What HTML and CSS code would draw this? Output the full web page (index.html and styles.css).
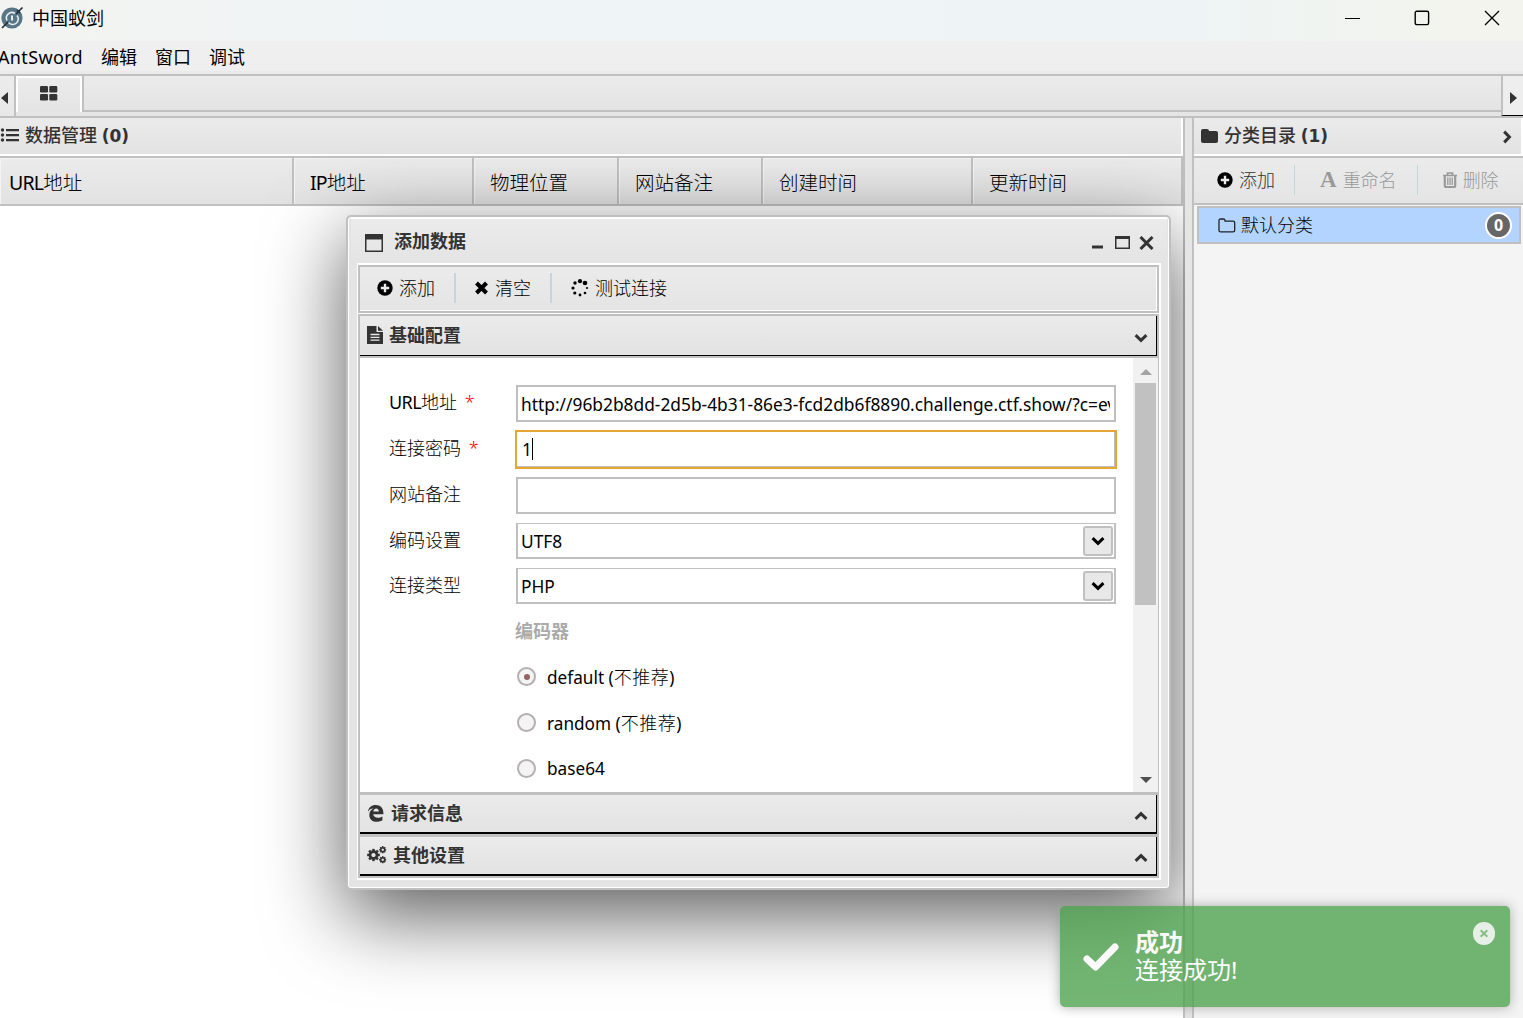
FILE: index.html
```html
<!DOCTYPE html>
<html lang="zh-CN">
<head>
<meta charset="utf-8">
<title>中国蚁剑</title>
<link rel="stylesheet" href="styles.css">
</head>
<body>
<svg class="defs" width="0" height="0">
  <symbol id="plus" viewBox="0 0 16 16"><circle cx="8" cy="8" r="7.7"/><path d="M8 3.8v8.4M3.8 8h8.4" stroke="#ececec" stroke-width="2.4"/></symbol>
  <symbol id="chev" viewBox="0 0 14 10"><path d="M1.6 2.2 7 7.4l5.4-5.2" fill="none" stroke="currentColor" stroke-width="3"/></symbol>
  <symbol id="cog" viewBox="-8 -8 16 16"><circle r="4.3" fill="none" stroke="currentColor" stroke-width="3.4"/><path d="M0-7.8V-5M0 5v2.8M-7.8 0H-5M5 0h2.8M-5.5-5.5l2 2M3.5 3.5l2 2M-5.5 5.5l2-2M3.5-3.5l2-2" stroke="currentColor" stroke-width="3"/></symbol>
</svg>

<header class="titlebar">
  <svg class="logo" viewBox="0 0 24 24" width="24" height="24"><circle cx="12" cy="12" r="10.6" fill="#587586"/><path d="M7 14.5a5.5 5.5 0 0 1 8-7M17 9.500a5.500 5.500 0 0 1-8.500 7" fill="none" stroke="#e8eef0" stroke-width="1.600"/><path d="M12 9.500v5" stroke="#e8eef0" stroke-width="2"/><path d="M2 22 8 16M16 8l6.500-6.500M17 4l3 3" stroke="#222f38" stroke-width="1.600"/></svg>
  <span class="app-name">中国蚁剑</span>
  <div class="win-ctl">
    <svg width="16" height="16"><path d="M0 8.500h15" stroke="#000"/></svg>
    <svg width="16" height="16"><rect x="1.200" y="1.200" width="13.400" height="13.400" rx="1.500" fill="none" stroke="#000" stroke-width="1.400"/></svg>
    <svg width="16" height="16"><path d="M1 1l14 14M15 1 1 15" stroke="#000" stroke-width="1.300"/></svg>
  </div>
</header>
<nav class="menubar"><span class="brand">AntSword</span><span>编辑</span><span>窗口</span><span>调试</span></nav>

<div class="tabbar">
  <div class="scroll-l"><svg width="7" height="12"><path d="M7 0v12L0 6z" fill="#333"/></svg></div>
  <div class="tab"><svg width="18" height="15" fill="#333"><rect width="8" height="6.600" rx="1.300"/><rect x="9.300" width="8" height="6.600" rx="1.300"/><rect y="7.900" width="8" height="6.600" rx="1.300"/><rect x="9.300" y="7.900" width="8" height="6.600" rx="1.300"/></svg></div>
  <div class="tab-rest"></div>
  <div class="scroll-r"><svg width="7" height="12"><path d="M0 0v12l7-6z" fill="#333"/></svg></div>
</div>

<main class="work">
  <section class="data">
    <h2 class="bar"><svg width="19" height="15" fill="#333"><circle cx="2.500" cy="2" r="1.700"/><circle cx="2.500" cy="7" r="1.700"/><circle cx="2.500" cy="12" r="1.700"/><path d="M6 1h13v2.300H6zM6 6h13v2.300H6zM6 11h13v2.300H6z"/></svg><span>数据管理 <b>(0)</b></span></h2>
    <div class="grid-head">
      <div class="c1"><span><i>URL</i>地址</span></div><div class="c2"><span><i>IP</i>地址</span></div><div class="c3"><span>物理位置</span></div><div class="c4"><span>网站备注</span></div><div class="c5"><span>创建时间</span></div><div class="c6"><span>更新时间</span></div>
    </div>
    <div class="layer">
      <div class="dialog">
        <div class="dlg-head">
          <svg width="18" height="18"><path d="M0 0h18v18H0zM1.500 5.500v11h15v-11z" fill="#333" fill-rule="evenodd"/></svg>
          <span class="dlg-title">添加数据</span>
          <svg width="11" height="16"><path d="M0 10.500h11v3H0z" fill="#333"/></svg>
          <svg class="max" width="15" height="13"><path d="M0 0h15v13H0zM1.500 3v8.500h12V3z" fill="#333" fill-rule="evenodd"/></svg>
          <svg class="cls" width="15" height="14"><path d="M1.500 1l12 12M13.500 1l-12 12" stroke="#333" stroke-width="3"/></svg>
        </div>
        <div class="dlg-body">
          <div class="toolbar">
            <div class="btn b1"><svg width="16" height="16"><use href="#plus"/></svg>添加</div><i class="sep"></i>
            <div class="btn b2"><svg width="13" height="14"><path d="M1.500 2l10 10M11.500 2l-10 10" stroke="#000" stroke-width="4"/></svg>清空</div><i class="sep"></i>
            <div class="btn b3"><svg width="18" height="18"><circle cx="9" cy="2.200" r="2.100"/><circle cx="14" cy="4" r="2.300"/><circle cx="16" cy="9" r="1.100"/><circle cx="14" cy="14" r="1.300"/><circle cx="9" cy="16" r="1.400"/><circle cx="3.800" cy="14" r="1.600"/><circle cx="2" cy="9" r="1.600"/><circle cx="4" cy="4" r="1.700"/></svg>测试连接</div>
          </div>
          <div class="acc">
            <h3 class="acc-head first"><svg width="16" height="18" fill="#333"><path d="M0 0h9.500v6H16v12H0z"/><path d="M11 0l5 4.700h-5z"/><path d="M3.500 8.500h9M3.500 11.300h9M3.500 14.200h9" stroke="#e8e8e8" stroke-width="1.300"/></svg><span>基础配置</span><svg class="arrow" width="14" height="10"><use href="#chev"/></svg></h3>
            <div class="acc-body">
              <div class="form">
                <label><i>URL</i>地址 <em>*</em></label><div class="input"><span class="url">http://96b2b8dd-2d5b-4b31-86e3-fcd2db6f8890.challenge.ctf.show/?c=eval</span></div>
                <label>连接密码 <em>*</em></label><div class="input focus"><span>1</span><i class="caret"></i></div>
                <label>网站备注</label><div class="input"></div>
                <label>编码设置</label><div class="input select"><span>UTF8</span><i class="drop"><svg width="14" height="10"><use href="#chev"/></svg></i></div>
                <label>连接类型</label><div class="input select"><span>PHP</span><i class="drop"><svg width="14" height="10"><use href="#chev"/></svg></i></div>
                <div class="radios">
                  <strong>编码器</strong>
                  <div class="radio"><i class="dot on"></i><span>default (<u>不推荐</u>)</span></div>
                  <div class="radio"><i class="dot"></i><span>random (<u>不推荐</u>)</span></div>
                  <div class="radio"><i class="dot"></i><span>base64</span></div>
                </div>
              </div>
              <div class="vscroll"><svg width="12" height="6"><path d="M0 6 6 0l6 6z" fill="#a3a3a3"/></svg><i class="thumb"></i><svg width="12" height="6"><path d="M0 0h12L6 6z" fill="#505050"/></svg></div>
            </div>
            <h3 class="acc-head"><svg width="18" height="19"><path d="M.8 8C1.500 3.500 4.600 1 8.700 1c5 0 7.700 3.500 7.700 7.700v1.600H6.200c.3 3.700 5.700 4.500 9.200 2.100v3.800c-4.700 2.800-13.100 2-13.100-5.300 0-3.200 2-5.300 4.300-6.300C4 4.600 2 5.700.8 8zM6.400 7.400h5.400C11.700 3.600 6.900 3.700 6.400 7.400z" fill="#333" fill-rule="evenodd"/></svg><span>请求信息</span><svg class="arrow up" width="14" height="10"><use href="#chev"/></svg></h3>
            <h3 class="acc-head last"><svg width="20" height="18"><use href="#cog" x="0" y="2.500" width="13" height="13"/><use href="#cog" x="12" y="0" width="7.500" height="7.500"/><use href="#cog" x="12" y="10" width="7.500" height="7.500"/></svg><span>其他设置</span><svg class="arrow up" width="14" height="10"><use href="#chev"/></svg></h3>
          </div>
        </div>
      </div>
    </div>
  </section>

  <aside class="side">
    <h2 class="bar"><svg width="17" height="14"><path d="M0 2Q0 0 2 0h4q2 0 2 2h7q2 0 2 2v8q0 2-2 2H2q-2 0-2-2z" fill="#333"/></svg><span>分类目录 <b>(1)</b></span><svg class="right" width="14" height="10"><use href="#chev"/></svg></h2>
    <div class="side-tools">
      <div class="btn s1"><svg width="16" height="16"><use href="#plus"/></svg>添加</div><i class="sep"></i>
      <div class="btn s2"><b class="glyph">A</b>重命名</div><i class="sep"></i>
      <div class="btn s3"><svg width="14" height="16" fill="none" stroke="#999"><path d="M4.500 3V1h5v2M0 3.500h14" stroke-width="1.700"/><path d="M1.800 4v9.800q0 1.200 1.200 1.200h8q1.200 0 1.200-1.200V4" stroke-width="2.200"/><path d="M4.800 5.500V13M7 5.500V13M9.200 5.500V13" stroke-width="1.300"/></svg>删除</div>
    </div>
    <div class="cat"><svg width="18" height="15"><path d="M1 2.500Q1 1 2.500 1h3Q7 1 7 2.500v.7h8q1.700 0 1.700 1.500v7.500q0 1.600-1.700 1.600H2.500Q1 13.800 1 12.200z" fill="none" stroke="#222" stroke-width="1.300"/></svg><span>默认分类</span><b class="badge">0</b></div>
  </aside>
</main>

<div class="toast">
  <svg class="ok" width="36" height="28"><path d="M4 16l8.500 8L32 4" fill="none" stroke="#fff" stroke-width="7" stroke-linecap="round" stroke-linejoin="round"/></svg>
  <div class="toast-text"><strong>成功</strong><span>连接成功!</span></div>
  <svg class="x" width="22" height="23"><rect width="22" height="23" rx="11" fill="#e3f0e3"/><path d="M7.700 8.200l6.600 6.600M14.300 8.200l-6.600 6.600" stroke="#6fb16f" stroke-width="2"/></svg>
</div>
</body>
</html>
```

FILE: styles.css
```css
* { box-sizing: border-box; }
html, body { height: 100%; }
body {
  margin: 0;
  display: flex;
  flex-direction: column;
  overflow: hidden;
  position: relative;
  background: #e5e5e5;
  font: 18px/24px "Noto Sans", "Noto Sans CJK SC", sans-serif;
  color: #000;
}
.defs { position: absolute; }
svg { flex: none; display: block; }
i, em, u { font-style: normal; text-decoration: none; }
h2, h3 { margin: 0; font-size: 18px; }

.titlebar { flex: none; height: 41px; display: flex; align-items: center; padding-bottom: 5px; background: linear-gradient(90deg, #f3f4f1, #eff4f6 28%, #eef4f5 78%, #f2f4ed 95%); }
.app-name { margin-left: 8px; }
.win-ctl { margin-left: auto; display: flex; gap: 54px; padding-right: 23px; }
.win-ctl svg:first-child { margin-right: -1px; }
.menubar { flex: none; height: 33px; display: flex; align-items: center; gap: 18px; padding-top: 2px; background: #efefef; border-bottom: 3px solid #eaeaea; }
.brand { width: 86px; margin-left: -2px; margin-right: -1px; letter-spacing: .35px; white-space: nowrap; }

.tabbar { flex: none; height: 44px; display: flex; border: solid #c0c0c0; border-width: 2px 0; }
.scroll-l { width: 16px; border-right: 2px solid #c0c0c0; display: flex; align-items: center; padding: 4px 0 0 1px; background: linear-gradient(#ececec, #e8e8e8); }
.tab { width: 66px; height: 36px; border: 2px solid #fff; border-bottom: 0; display: flex; justify-content: center; padding-top: 8px; background: linear-gradient(#ebebeb, #e4e4e4); }
.tab-rest { flex: 1; height: 36px; border: 2px solid #c0c0c0; border-top: 0; border-right: 0; background: linear-gradient(#ebebeb, #e4e4e4); }
.scroll-r { width: 22px; border-left: 2px solid #c0c0c0; border-bottom: 1px solid #000; padding: 4px 0 0 7px; display: flex; align-items: center; background: #eee; }

.work { flex: 1; display: flex; min-height: 0; }
.data { flex: none; width: 1185px; border-right: 2px solid #c0c0c0; background: #fff; position: relative; }
.bar { height: 40px; display: flex; align-items: center; gap: 6px; padding-bottom: 3px; color: #333; border-bottom: 2px solid #c0c0c0; box-shadow: inset 0 -2px #fff, inset -2px 0 #fff; background: linear-gradient(#ebebeb, #e2e2e2); }
.bar span { font-weight: 500; }
.bar b { font: 700 17px/24px "DejaVu Sans", sans-serif; }
.grid-head { display: flex; height: 48px; border-bottom: 2px solid #c0c0c0; background: linear-gradient(#ebebeb, #e2e2e2); }
.grid-head div { border-right: 2px solid #c0c0c0; padding-left: 16px; display: flex; align-items: center; box-shadow: inset 1px 1px #f4f4f4; font-size: 19.500px; font-weight: 300; padding-top: 3px; }
.grid-head span { white-space: nowrap; }
.grid-head i { font-weight: 400; letter-spacing: -.8px; }
.grid-head .c1 { width: 294px; padding-left: 9px; }
.c2 { width: 180px; } .c3 { width: 145px; } .c4 { width: 144px; } .c5 { width: 210px; } .c6 { width: 210px; }
.layer { position: absolute; inset: 0 -2px 0 0; overflow: hidden; }

.dialog { position: absolute; left: 346px; top: 97px; width: 825px; height: 675px; border: 2px solid #c0c0c0; border-radius: 5px; padding: 2px 2px 2px 3px; background: #e4e4e4; box-shadow: inset 0 0 0 1px #fff, 0 25px 80px rgba(0,0,0,.65); }
.dlg-head { height: 44px; display: flex; align-items: center; padding: 3px 13px 0 14px; background: linear-gradient(#ebebeb, #e4e4e4); box-shadow: 0 -1px #fff; }
.dlg-head > svg:first-child { margin-top: 1px; }
.dlg-title { margin: -4px auto 0 11px; font-weight: 700; color: #333; }
.max { margin-left: 12px; }
.cls { margin-left: 9px; }
.dlg-body { margin: 0 6px; border: 2px solid #fff; border-left-width: 1px; height: 617px; background: #fff; }
.toolbar, .side-tools { display: flex; align-items: center; background: linear-gradient(#ebebeb, #e4e4e4); }
.toolbar { height: 48px; border: 2px solid #c0c0c0; box-shadow: inset -1px -1px #fff; padding-bottom: 3px; }
.btn { display: flex; align-items: center; gap: 6px; font-weight: 300; }
.sep { width: 2px; height: 30px; background: #c3d6db; }
.b1 { margin-left: 17px; margin-right: 19px; }
.b2 { margin: 0 19px 0 19px; gap: 7px; }
.b3 { margin-left: 19px; }
.acc { margin-top: 1px; border: solid #c0c0c0; border-width: 0 2px 2px; height: 564px; display: flex; flex-direction: column; }
.acc-head { flex: none; height: 42px; border-top: 3px solid #c0c0c0; display: flex; align-items: center; gap: 6px; padding: 0 9px 3px 7px; color: #333; background: linear-gradient(#ebebeb, #e2e2e2); box-shadow: inset -1px -2px #000; }
.acc-head.first { height: 42px; border-top-width: 2px; box-shadow: inset -1px -1px #000; padding-top: 1px; }
.acc-head.last { height: 42px; }
.arrow { margin-left: auto; margin-top: 5px; }
.up { transform: rotate(180deg); }
.acc-body { flex: 1; min-height: 0; display: flex; border-top: 2px solid #c0c0c0; background: #fff; margin-right: -1px; overflow: hidden; }
.form { flex: 1; padding: 27px 17px 0 30px; display: grid; grid-template-columns: 126px 600px; grid-template-rows: 46px 46px 46px 45px 46px auto; }
.form label { font-weight: 300; padding-top: 5px; margin-left: -1px; }
.form label i { font-weight: 400; letter-spacing: -.6px; }
em { color: #f00; margin-left: 3px; }
.input { height: 37px; border: 2px solid #c0c0c0; padding: 0 4px 0 3px; display: flex; align-items: center; overflow: hidden; font-size: 17.350px; }
.url { overflow: hidden; white-space: nowrap; }
.focus { border-width: 1px 2px 2px 1px; padding-left: 5px; outline: 2px solid #e5a632; outline-offset: -1px; }
.caret { width: 1px; height: 22px; background: #000; }
.select { height: 36px; border-top-width: 1px; padding-right: 1px; }
.drop { margin-left: auto; width: 30px; height: 30px; border: 2px solid #c0c0c0; border-radius: 3px; background: #e8e8e8; display: flex; align-items: center; justify-content: center; }
.radios { grid-column: 2; display: flex; flex-direction: column; }
.radios strong { color: #aaa; height: 46px; margin-left: -1px; padding-top: 5px; }
.radio { height: 46px; display: flex; align-items: flex-start; padding-top: 5px; font-size: 17.200px; }
.radio u { font-weight: 300; font-size: 18px; letter-spacing: .5px; }
.dot { width: 19px; height: 19px; margin: 2px 11px 0 1px; border: 2px solid #b5afb1; border-radius: 50%; background: #f4f4f4; display: flex; align-items: center; justify-content: center; }
.on::after { content: ""; width: 6px; height: 6px; border-radius: 50%; background: #956262; }
.vscroll { width: 25px; background: #f1f1f1; display: flex; flex-direction: column; align-items: center; padding: 11px 0 9px; }
.thumb { width: 21px; height: 222px; background: #c1c1c1; margin: 8px 0 auto; }

.side { flex: 1; margin-left: 7px; border-left: 2px solid #c0c0c0; background: #f4f4f4; }
.side .bar { padding-left: 7px; gap: 6px; padding-right: 9px; }
.right { margin-left: auto; margin-top: 3px; transform: rotate(-90deg); }
.side-tools { height: 47px; border-bottom: 2px solid #c0c0c0; padding-bottom: 2px; }
.s1 { margin: 0 19px 0 23px; color: #333; }
.side-tools .sep { width: 1px; }
.s1 svg { fill: #000; }
.s2 { margin: 0 20px 0 25px; color: #999; }
.s3 { margin-left: 25px; color: #999; }
.glyph { font: 700 23px/24px "Liberation Serif", serif; }
.cat { margin: 1px 2px 0 3px; height: 38px; border: 2px solid #c0c0c0; background: #b3d4ff; display: flex; align-items: center; gap: 5px; padding: 0 7px 0 19px; font-weight: 300; }
.badge { margin-left: auto; width: 27px; height: 27px; border-radius: 50%; border: 2px solid #fff; background: #666; color: #fff; font-size: 16px; line-height: 23px; text-align: center; font-weight: 700; }

.toast { position: absolute; left: 1060px; top: 906px; width: 450px; height: 101px; border-radius: 5px; background: #51a351; opacity: .8; box-shadow: 0 0 12px #999; display: flex; align-items: flex-start; color: #fff; font-size: 24px; line-height: 28px; }
.ok { margin: 37px 16px 0 23px; }
.toast-text { display: flex; flex-direction: column; padding-top: 22px; }
.x { margin: 16px 15px 0 auto; }
```
